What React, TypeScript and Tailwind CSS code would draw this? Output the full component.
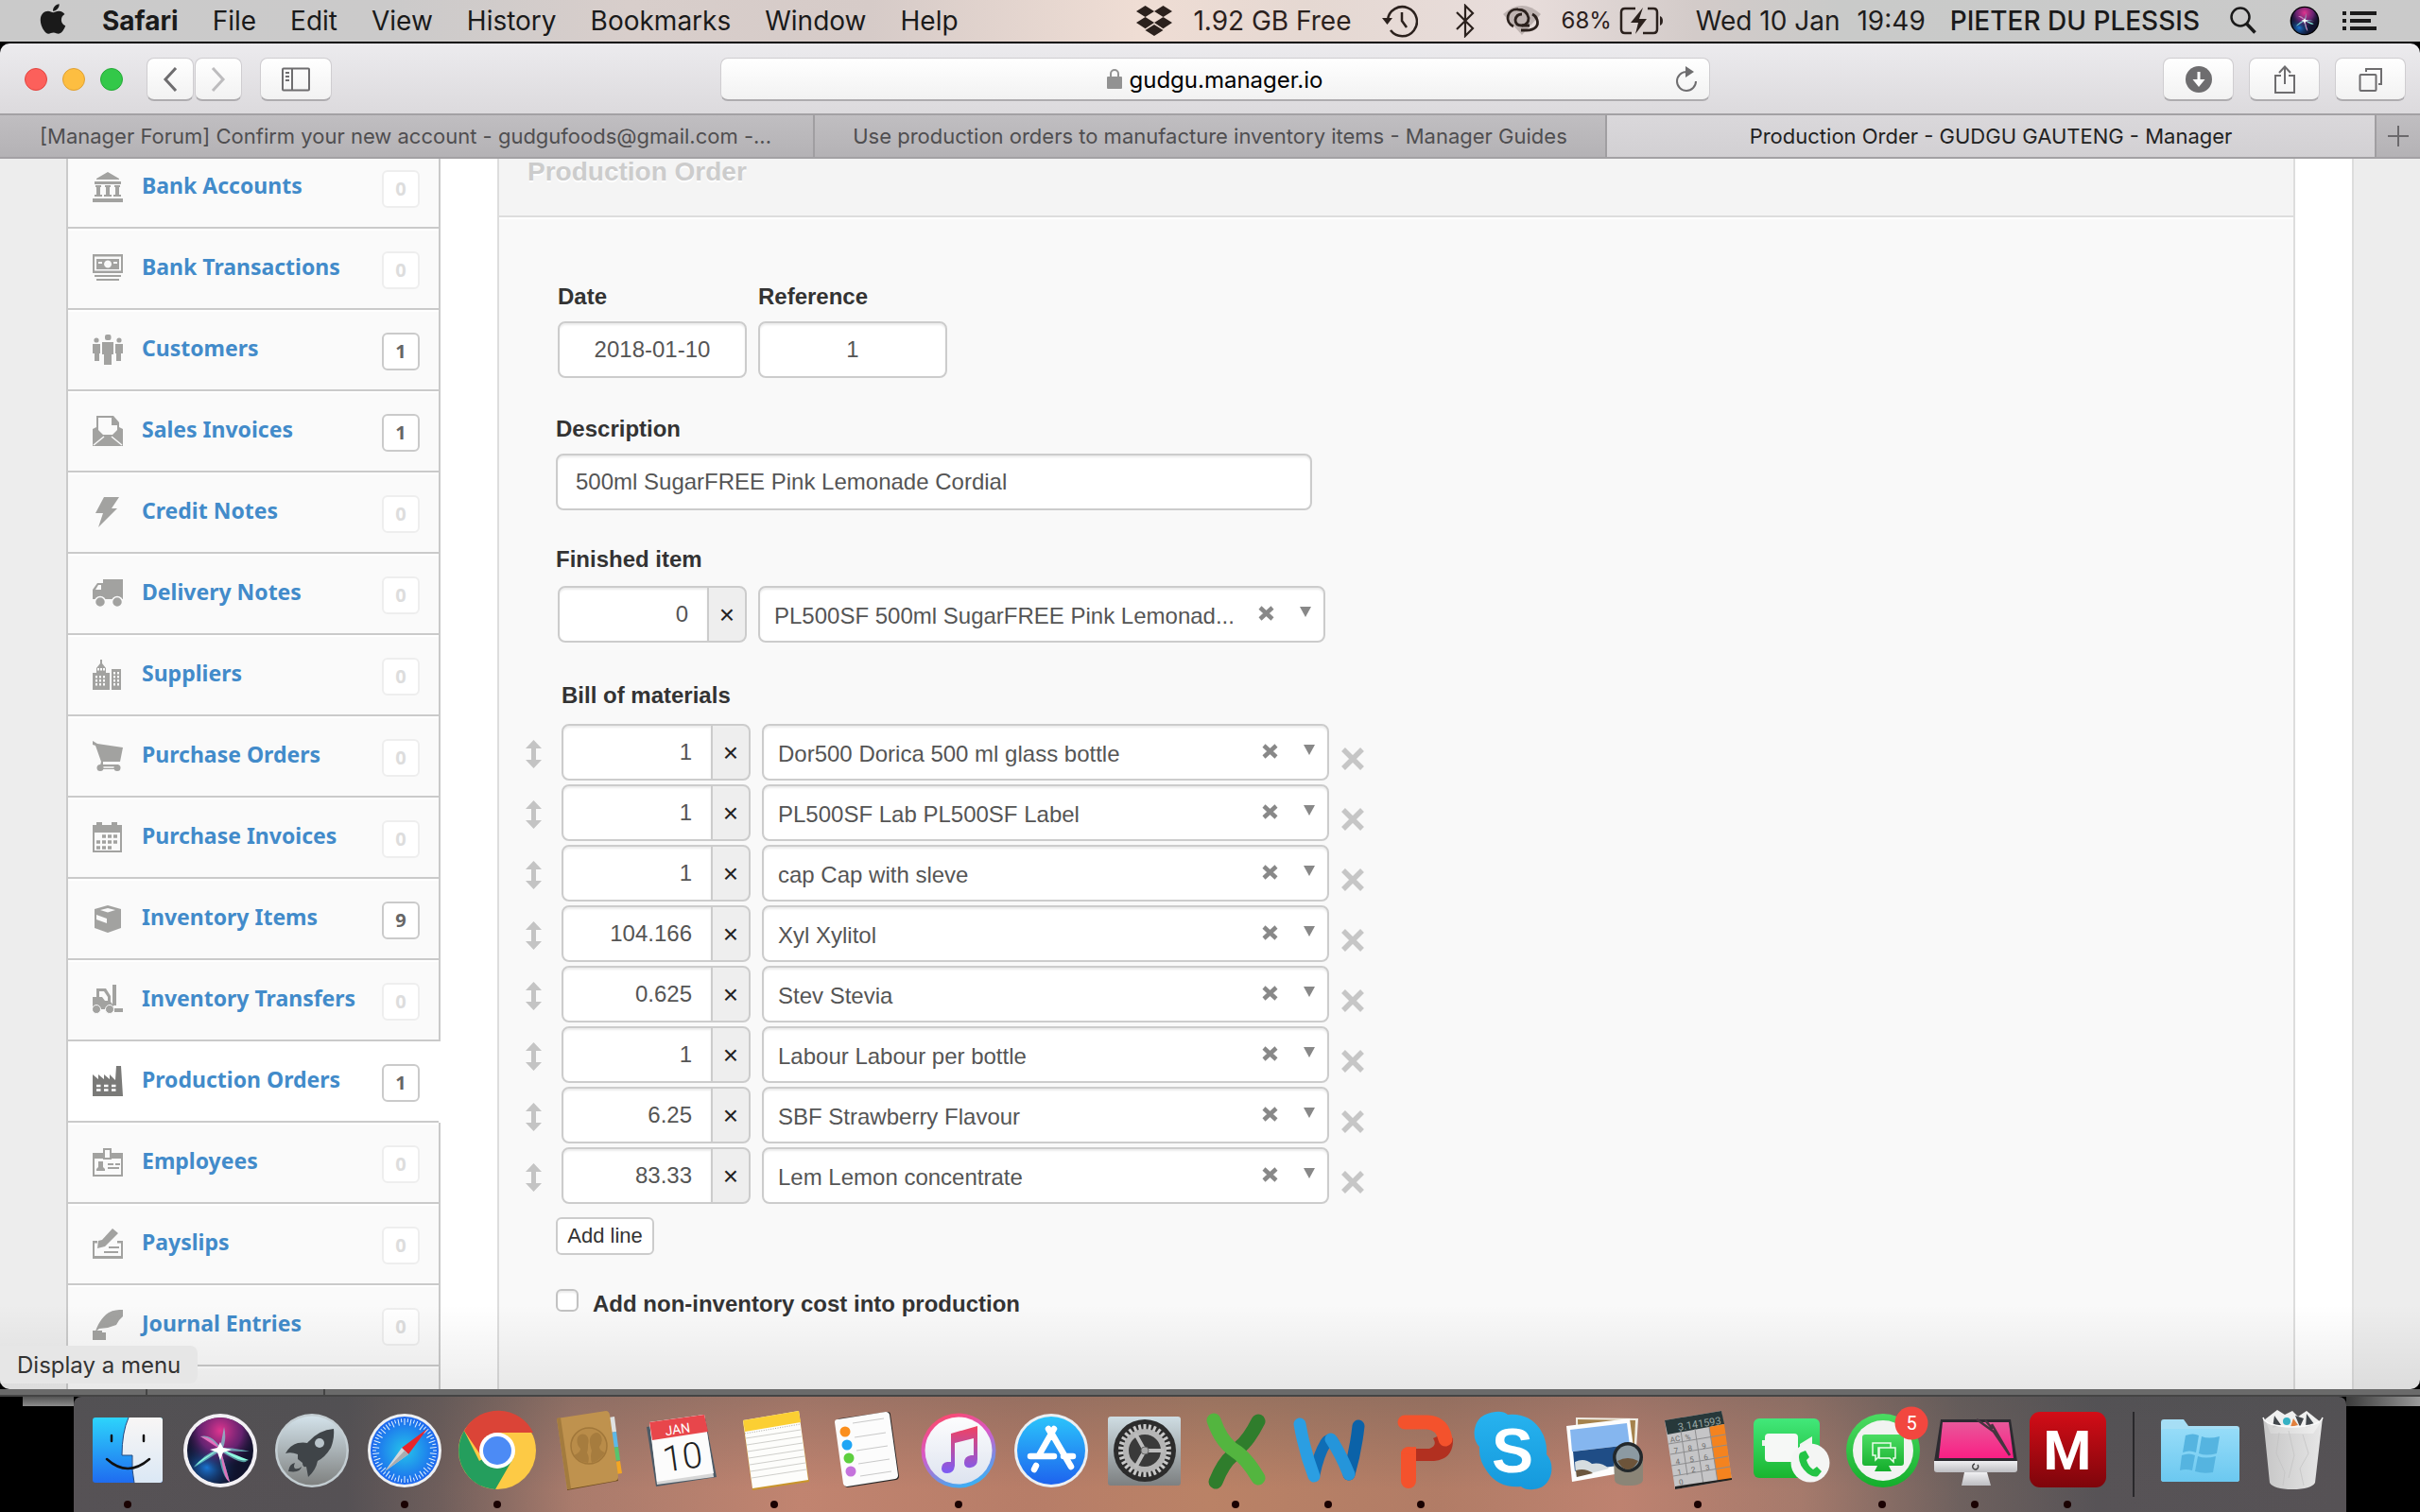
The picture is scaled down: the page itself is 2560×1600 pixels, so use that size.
import React from "react";
import { FaApple, FaDropbox } from "react-icons/fa";

type Kids = { children: React.ReactNode };

/* ---------- menu bar ---------- */

const menus = ["File", "Edit", "View", "History", "Bookmarks", "Window", "Help"];

function MenuBar() {
  return (
    <header className="flex h-[46px] shrink-0 items-center justify-between border-b-2 border-black bg-[linear-gradient(90deg,#cacaca_0%,#cbcaca_16%,#d8cecb_26%,#d6cbc8_36%,#efddd4_47%,#e5d8d2_54%,#e8dddb_63%,#d3cbc9_70%,#c9cac9_76%,#cacaca_100%)] pl-[42px] pr-[46px] text-[28px] leading-8 text-[#1a1a1a]">
      <nav className="flex items-center gap-9">
        <button aria-label="Apple menu" className="mr-0.5 flex w-7 justify-center">
          <FaApple size={36} className="-mt-1 shrink-0" />
        </button>
        <button className="font-bold">Safari</button>
        {menus.map((m) => (
          <button key={m}>{m}</button>
        ))}
      </nav>
      <div className="flex items-center text-[#2b211d]">
        <FaDropbox size={38} className="mr-[22px]" />
        <span className="mr-[32px]">1.92 GB Free</span>
        <svg width="38" height="36" viewBox="0 0 38 36" className="mr-[40px]" fill="none" stroke="currentColor" strokeWidth="2.5">
          <path d="M6 17A15.500 15.500 0 1 1 9 28" />
          <path d="M0 15h11l-5.500 7z" fill="currentColor" stroke="none" />
          <path d="M21 9v9l5 7" />
        </svg>
        <svg width="20" height="36" viewBox="0 0 20 36" className="mr-[30px]" fill="none" stroke="currentColor" strokeWidth="2.200">
          <path d="M1 9l17 17-8 8V2l8 8L1 27" />
        </svg>
        <svg width="40" height="34" viewBox="0 0 40 34" className="mr-[22px]" fill="none" stroke="currentColor" strokeWidth="2.800">
          <path d="M0 10Q20-8 40 10L20 32z" fill="#2b211d" fillOpacity=".22" stroke="none" />
          <path d="M11 23C1 18 4 4 16 5q9 0 11 9 0 7-7 8" />
          <path d="M19 27h6c9 0 13-5 11-11q-1-4-5-6M28 22h-8q-7 0-7-6 1-6 7-6" />
        </svg>
        <span className="mr-2 text-2xl">68%</span>
        <svg width="47" height="30" viewBox="0 0 47 30" className="mr-[34px]" fill="none" stroke="currentColor" strokeWidth="2.500">
          <path d="M17 2H6Q2 2 2 6v18q0 4 4 4h7M30 2h6q4 0 4 4v18q0 4-4 4H25" />
          <path d="M25 1L12 17h8l-3 12 12-16h-8z" fill="currentColor" stroke="none" />
          <path d="M43 10v10q3-1 3-5t-3-5z" fill="currentColor" stroke="none" />
        </svg>
        <span className="mr-[18px] text-[#1f1d1c]">Wed 10 Jan</span>
        <span className="mr-[26px] text-[#1f1d1c]">19:49</span>
        <span className="mr-[32px] font-medium text-[#1a1a1a]">PIETER DU PLESSIS</span>
        <button aria-label="Search" className="mr-[34px]">
          <svg width="29" height="30" viewBox="0 0 29 30" fill="none" stroke="#1a1a1a">
            <circle cx="11" cy="11" r="9.500" strokeWidth="2.500" />
            <path d="M17.500 18l9 9.500" strokeWidth="3.500" />
          </svg>
        </button>
        <svg width="32" height="32" viewBox="0 0 98 98" className="mr-[24px]">
          <Siri id="m" ring="#000" r={47} />
        </svg>
        <button aria-label="Notification centre">
          <svg width="36" height="20" viewBox="0 0 36 20" fill="#1a1a1a">
            <path d="M0 0h4v4H0zM8 0h28v4H8zM0 8h4v4H0zM8 8h22v4H8zM0 16h4v4H0zM8 16h28v4H8z" />
          </svg>
        </button>
      </div>
    </header>
  );
}

/* ---------- browser chrome ---------- */

const chromeBtn =
  "flex h-[46px] items-center justify-center rounded-lg border border-[#cfcdd0] border-b-2 border-b-[#aeacaf] bg-linear-to-b from-white to-[#f2f2f2]";

function Toolbar() {
  return (
    <div className="flex h-[74px] shrink-0 items-center rounded-t-[10px] bg-linear-to-b from-[#ecebee] to-[#dcdadd] px-[26px] pt-0.5">
      <div className="flex flex-1 items-center">
        <button aria-label="Close" className="mr-4 size-6 rounded-full border border-[#e2443f] bg-[#fc605b]" />
        <button aria-label="Minimise" className="mr-4 size-6 rounded-full border border-[#dfa034] bg-[#fdbe41]" />
        <button aria-label="Zoom" className="mr-[25px] size-6 rounded-full border border-[#24a937] bg-[#33c849]" />
        <button aria-label="Back" className={chromeBtn + " mr-px w-[50px]"}>
          <svg width="16" height="26" viewBox="0 0 16 26" fill="none" stroke="#6e6d6f" strokeWidth="3">
            <path d="M14 1L3 13l11 12" />
          </svg>
        </button>
        <button aria-label="Forward" className={chromeBtn + " mr-[19px] w-[50px]"}>
          <svg width="16" height="26" viewBox="0 0 16 26" fill="none" stroke="#bdbcbe" strokeWidth="3">
            <path d="M2 1l11 12L2 25" />
          </svg>
        </button>
        <button aria-label="Show sidebar" className={chromeBtn + " w-[76px]"}>
          <svg width="32" height="26" viewBox="0 0 32 26" fill="none" stroke="#6e6d6f" strokeWidth="2">
            <rect x="2" y="1.500" width="28" height="23" rx="1" />
            <path d="M12 2v23M5 6h4M5 10h4M5 14h4" />
          </svg>
        </button>
      </div>
      <div className={chromeBtn + " relative w-[1047px] pt-0.5"}>
        <svg width="16" height="22" viewBox="0 0 16 22" className="-mt-1 mr-2">
          <path d="M4 10V6a4 4 0 0 1 8 0v4" fill="none" stroke="#929292" strokeWidth="2" />
          <rect x="0" y="9" width="16" height="13" rx="1" fill="#929292" />
        </svg>
        <input aria-label="Address" defaultValue="gudgu.manager.io" className="w-[206px] bg-transparent text-2xl text-black outline-none" />
        <button aria-label="Reload" className="absolute right-3 top-2">
          <svg width="24" height="28" viewBox="0 0 24 28" fill="none" stroke="#6e6d6f" strokeWidth="2">
            <path d="M12 6a10 10 0 1 0 10 10" />
            <path d="M11 0l9 6-9 6z" fill="#6e6d6f" stroke="none" />
          </svg>
        </button>
      </div>
      <div className="-mr-[11px] flex flex-1 justify-end gap-4">
        <button aria-label="Downloads" className={chromeBtn + " w-[75px]"}>
          <svg width="28" height="28" viewBox="0 0 28 28">
            <circle cx="14" cy="14" r="14" fill="#6e6d6f" />
            <path d="M12.500 6h3v8h5L14 22l-6.500-8h5z" fill="#fff" />
          </svg>
        </button>
        <button aria-label="Share" className={chromeBtn + " w-[75px]"}>
          <svg width="24" height="32" viewBox="0 0 24 32" fill="none" stroke="#6e6d6f" strokeWidth="2">
            <path d="M8 12H2v18h20V12h-6M12 21V3M6 9l6-6.500L18 9" />
          </svg>
        </button>
        <button aria-label="Show all tabs" className={chromeBtn + " w-[75px]"}>
          <svg width="26" height="26" viewBox="0 0 26 26" fill="none" stroke="#6e6d6f" strokeWidth="2">
            <rect x="1.500" y="8" width="17" height="17" rx="1" />
            <path d="M8 5V2h16v16h-3" />
          </svg>
        </button>
      </div>
    </div>
  );
}

function Tabs() {
  return (
    <div className="flex h-12 shrink-0 items-stretch border-y-2 border-[#a3a1a4] bg-linear-to-b from-[#c0bec1] to-[#b4b2b5] text-[22px] text-[#4f4e50]">
      <a href="#forum" className="flex w-[862px] items-center border-r-2 border-[#a09ea1] pl-[42px]">
        [Manager Forum] Confirm your new account - gudgufoods@gmail.com -...
      </a>
      <a href="#guides" className="flex w-[838px] items-center justify-center border-r-2 border-[#a09ea1]">
        Use production orders to manufacture inventory items - Manager Guides
      </a>
      <a href="#order" className="flex flex-1 items-center justify-center border-r-2 border-[#a09ea1] bg-linear-to-b from-[#dad8db] to-[#d2d0d3] text-[#222]">
        Production Order - GUDGU GAUTENG - Manager
      </a>
      <button aria-label="New tab" className="flex w-[46px] items-center justify-center">
        <svg width="22" height="22" viewBox="0 0 22 22" stroke="#6b696c" strokeWidth="2">
          <path d="M11 0v22M0 11h22" />
        </svg>
      </button>
    </div>
  );
}

/* ---------- sidebar ---------- */

const glyphs: Record<string, React.ReactNode> = {
  bank: (
    <path d="M16 0l12 7v1H4V7zM2 10h28v3H2zM3 14h6v2H8v8h2v2H2v-2h2v-8H3zM13 14h6v2h-1v8h2v2h-8v-2h2v-8h-1zM23 14h6v2h-1v8h2v2h-8v-2h2v-8h-1zM0 28h32v4H0z" />
  ),
  cash: (
    <>
      <path fillRule="evenodd" d="M0 1h32v20H0zm2 2.500v15h28v-15z" />
      <path fillRule="evenodd" d="M4 6h24v11H4zm12 1.500a4 4 0 1 0 .1 0zM6 9v2h4V9zm16 0v2h4V9z" />
      <path d="M2 23h28v2H2zM4 27h24v2H4z" />
    </>
  ),
  people: (
    <>
      <rect x="13" y="0" width="6.500" height="6" rx="2" />
      <path d="M10 8h12v13h-2v11h-8V21h-2z" />
      <circle cx="4" cy="6" r="2.600" />
      <circle cx="28" cy="6" r="2.600" />
      <path d="M0 10h8v10H7v8H2v-8H0zM24 10h8v10h-2v8h-5v-8h-1z" />
    </>
  ),
  invoice: (
    <>
      <path fillRule="evenodd" d="M4 0h18l6 7v5l4 2v18H0V14l4-2zm2 2v13l5 5h10l5-5V10h-6V2z" />
      <path d="M1 31l11-9M31 31l-11-9" stroke="#fafafa" strokeWidth="1.500" />
    </>
  ),
  bolt: <path d="M12 0h16l-8 12h6L6 32l5-15H3z" />,
  truck: (
    <>
      <path fillRule="evenodd" d="M11 1h21v21H0V12l5-7h6zM9 7H6l-3 5h6z" />
      <circle cx="8" cy="25" r="5.500" stroke="#fafafa" strokeWidth="1.500" />
      <circle cx="26" cy="25" r="5.500" stroke="#fafafa" strokeWidth="1.500" />
    </>
  ),
  city: (
    <>
      <path d="M8 0h2v4l4 5v5h4v18H0V14h4V9l4-5zM20 10h10v22H20z" />
      <path d="M6 9v4M9 9v4M12 9v4M4 17v12M8 17v12M12 17v12M23 13v15M27 13v15" stroke="#fafafa" strokeWidth="2" strokeDasharray="2.500 1.500" />
    </>
  ),
  cart: (
    <>
      <path d="M0 0l5 3 27 4-3 15H11v3h16v5H8v-4l1-4L3 5 0 4z" />
      <path d="M11 28h13" stroke="#fafafa" strokeWidth="1.500" />
      <circle cx="8" cy="28.500" r="3.500" />
      <circle cx="26" cy="28.500" r="3.500" />
    </>
  ),
  calendar: (
    <>
      <path fillRule="evenodd" d="M0 3h4V0h6v3h10V0h6v3h5v29H0zm2 8v19h27V11z" />
      <path d="M10 15h17M4 21h23M4 27h17" stroke="#a2a2a0" strokeWidth="3.500" strokeDasharray="4 2" />
    </>
  ),
  box: (
    <>
      <path d="M16 2l14 4v20l-14 5-14-5V6z" />
      <path d="M8 7l8-2 8 2-8 2.500zM4 12l11 4v5L4 17z" fill="#fafafa" />
    </>
  ),
  forklift: (
    <>
      <path fillRule="evenodd" d="M4 4h10l5 8v6l3 4v4H0V13h4zm3 3v6h3l3 4h3v-4l-4-6z" />
      <path d="M21 0h4v22h-4zM23 25h9v4h-9z" />
      <circle cx="4" cy="26" r="4.500" stroke="#fafafa" />
      <circle cx="18" cy="26" r="4.500" stroke="#fafafa" />
    </>
  ),
  factory: (
    <>
      <path fill="#7a7a78" d="M25 0h5l2 32H0V9l6 5V9l6 5V9l6 5V9l6 6z" />
      <path d="M4 21h21M4 25.500h21" stroke="#fff" strokeWidth="2.500" strokeDasharray="4.500 3.500" />
    </>
  ),
  badge: (
    <>
      <path fillRule="evenodd" d="M0 6h11V1h9v5h12v25H0zm2 6v17h28V12H20v1h-9v-1zm11-9v8h5V3z" />
      <path d="M6 15h5v6l2 2v2H4v-2l2-2zM16 17h6v2h-6zM24 17h5v2h-5zM16 21h12v2H16z" />
    </>
  ),
  pencil: (
    <>
      <path fillRule="evenodd" d="M0 13h5v2.500H2V29h28V15.500h-4V13h6v19H0z" />
      <path d="M21 0l6 5-14 14-8 2 1-8 4-1zM17 19h11v2H17zM12 24h15v2H12z" />
    </>
  ),
  quill: <path d="M32 0v7l-4 4-3 5-9 3-9 1-4 3c2-6 6-15 14-20 5-3 10-3 15-3zM0 22h10v2h4v8H0z" />,
};

const items: [string, string, number][] = [
  ["Bank Accounts", "bank", 0],
  ["Bank Transactions", "cash", 0],
  ["Customers", "people", 1],
  ["Sales Invoices", "invoice", 1],
  ["Credit Notes", "bolt", 0],
  ["Delivery Notes", "truck", 0],
  ["Suppliers", "city", 0],
  ["Purchase Orders", "cart", 0],
  ["Purchase Invoices", "calendar", 0],
  ["Inventory Items", "box", 9],
  ["Inventory Transfers", "forklift", 0],
  ["Production Orders", "factory", 1],
  ["Employees", "badge", 0],
  ["Payslips", "pencil", 0],
  ["Journal Entries", "quill", 0],
];

function Sidebar() {
  return (
    <nav className="-mt-3 flex w-[396px] shrink-0 flex-col border-l-2 border-[#cacaca]">
      {items.map(([label, icon, count]) => {
        const active = label === "Production Orders";
        return (
          <a
            key={label}
            href={"#" + icon}
            className={
              "flex h-[86px] shrink-0 items-center border-b-2 border-b-[#cacaca] pl-[26px] pr-5 " +
              (active ? "mr-0.5 bg-white" : "border-r-2 border-r-[#cacaca] bg-[#fafafa] shadow-[inset_0_2px_0_#fff]")
            }
          >
            <svg width="32" height="32" viewBox="0 0 32 32" fill="#a2a2a0" className="shrink-0">
              {glyphs[icon]}
            </svg>
            <span className="ml-5 flex-1 pb-1 font-['Noto_Sans'] text-[23px] font-bold leading-8 text-[#428bca]">{label}</span>
            <span
              className={
                "mt-1 flex size-10 items-center justify-center rounded-md border-2 bg-white font-['Noto_Sans'] text-xl font-bold " +
                (count ? "border-[#cacaca] text-[#666]" : "border-[#eee] text-[#ddd]")
              }
            >
              {count}
            </span>
          </a>
        );
      })}
      <div className="flex-1 border-r-2 border-[#cacaca] bg-[#fafafa] shadow-[inset_0_2px_0_#fff]" />
    </nav>
  );
}

/* ---------- form ---------- */

const box =
  "h-[60px] border-2 border-[#ccc] bg-white text-2xl text-[#555] shadow-[inset_0_2px_2px_rgba(0,0,0,.075)] outline-none";

function Label({ children, htmlFor }: Kids & { htmlFor: string }) {
  return (
    <label htmlFor={htmlFor} className="block text-2xl font-bold leading-8 text-[#333]">
      {children}
    </label>
  );
}

function Quantity({ value, id, label }: { value: string; id?: string; label: string }) {
  return (
    <div className="flex w-[200px]">
      <input id={id} aria-label={label} defaultValue={value} className={box + " w-[160px] rounded-l-lg pr-5 text-right"} />
      <span className="-ml-0.5 flex h-[60px] w-[42px] items-center justify-center rounded-r-lg border-2 border-[#ccc] bg-[#eee] pt-0.5 text-[28px] text-[#222]">
        ×
      </span>
    </div>
  );
}

function ItemSelect({ value, label }: { value: string; label: string }) {
  return (
    <div className="relative w-[600px]">
      <select aria-label={label} className={box + " w-full appearance-none rounded-lg pl-[15px] pr-24 pt-1"}>
        <option>{value}</option>
      </select>
      <button type="button" aria-label="Clear" className="absolute right-[54px] top-[21px]">
        <svg width="17" height="16" viewBox="0 0 17 16" stroke="#888" strokeWidth="4.500">
          <path d="M2 2l13 12M15 2L2 14" />
        </svg>
      </button>
      <svg width="12" height="11" viewBox="0 0 12 11" fill="#888" className="pointer-events-none absolute right-[15px] top-[22px]">
        <path d="M0 0h12L6 11z" />
      </svg>
    </div>
  );
}

const materials = [
  ["1", "Dor500 Dorica 500 ml glass bottle"],
  ["1", "PL500SF Lab PL500SF Label"],
  ["1", "cap Cap with sleve"],
  ["104.166", "Xyl Xylitol"],
  ["0.625", "Stev Stevia"],
  ["1", "Labour Labour per bottle"],
  ["6.25", "SBF Strawberry Flavour"],
  ["83.33", "Lem Lemon concentrate"],
];

function OrderForm() {
  return (
    <main className="flex min-w-0 flex-1 flex-col border-x-2 border-[#ddd] bg-[#f9f9f9] font-['Liberation_Sans',Arial,sans-serif]">
      <h1 className="h-[62px] shrink-0 border-b-2 border-[#ddd] bg-[#f4f4f4] pl-[30px] text-[28px] font-bold leading-7 text-[#ccc] [text-shadow:0_2px_0_#fff]">
        Production Order
      </h1>
      <form className="border-t-2 border-white pl-[60px] pt-[66px]">
        <div className="flex gap-3 pl-0.5">
          <div className="flex w-[200px] flex-col gap-[10px]">
            <Label htmlFor="date">Date</Label>
            <input id="date" defaultValue="2018-01-10" className={box + " w-full rounded-lg text-center"} />
          </div>
          <div className="flex w-[200px] flex-col gap-[10px]">
            <Label htmlFor="ref">Reference</Label>
            <input id="ref" defaultValue="1" className={box + " w-full rounded-lg text-center"} />
          </div>
        </div>
        <div className="mt-[38px] flex flex-col gap-[10px]">
          <Label htmlFor="desc">Description</Label>
          <input id="desc" defaultValue="500ml SugarFREE Pink Lemonade Cordial" className={box + " w-[800px] rounded-lg pl-[19px]"} />
        </div>
        <div className="mt-9 flex flex-col gap-3">
          <Label htmlFor="finished">Finished item</Label>
          <div className="flex gap-3 pl-0.5">
            <Quantity id="finished" value="0" label="Finished quantity" />
            <ItemSelect value="PL500SF 500ml SugarFREE Pink Lemonad..." label="Finished item" />
          </div>
        </div>
        <div className="mt-10 flex flex-col gap-[14px]">
          <div className="pl-[6px]">
            <Label htmlFor="material-0">Bill of materials</Label>
          </div>
          <div className="-ml-8 flex flex-col gap-1">
            {materials.map(([qty, name], i) => (
              <div key={name} className="flex items-center">
                <svg width="17" height="30" viewBox="0 0 17 30" fill="#c4c4c4" className="mr-[21px] mt-1">
                  <path d="M8.500 0L17 9h-6v12h6l-8.500 9L0 21h6V9H0z" />
                </svg>
                <Quantity id={"material-" + i} value={qty} label={"Quantity " + name} />
                <div className="ml-3">
                  <ItemSelect value={name} label="Material" />
                </div>
                <button type="button" aria-label={"Remove " + name} className="ml-[13px] mt-[14px]">
                  <svg width="24" height="24" viewBox="0 0 24 24" stroke="#c6c6c6" strokeWidth="5.500">
                    <path d="M2 2l20 20M22 2L2 22" />
                  </svg>
                </button>
              </div>
            ))}
          </div>
        </div>
        <button type="button" className="mt-[14px] block h-10 w-[104px] rounded-md border-2 border-[#ccc] bg-white text-[22px] leading-8 text-[#333]">
          Add line
        </button>
        <div className="mt-9 flex items-center gap-[15px]">
          <input
            id="cost"
            type="checkbox"
            className="-mt-2 size-6 appearance-none rounded-md border-2 border-[#c2c2c2] bg-white shadow-[inset_0_2px_2px_rgba(0,0,0,.08)]"
          />
          <Label htmlFor="cost">Add non-inventory cost into production</Label>
        </div>
      </form>
    </main>
  );
}

/* ---------- dock icons, each on a 98 x 98 canvas ---------- */

function Grad({ id, a, b, h }: { id: string; a: string; b: string; h?: boolean }) {
  return (
    <linearGradient id={id} x1="0" y1="0" x2={h ? 1 : 0} y2={h ? 0 : 1}>
      <stop stopColor={a} />
      <stop offset="1" stopColor={b} />
    </linearGradient>
  );
}

function Siri({ id, ring, r }: { id: string; ring: string; r: number }) {
  return (
    <>
      <radialGradient id={"sa" + id} cx=".5" cy=".2" r=".6">
        <stop stopColor="#e0358f" />
        <stop offset=".55" stopColor="#7a2680" stopOpacity=".8" />
        <stop offset="1" stopColor="#10122c" stopOpacity="0" />
      </radialGradient>
      <radialGradient id={"sb" + id} cx=".3" cy=".75" r=".5">
        <stop stopColor="#1b78d8" />
        <stop offset="1" stopColor="#10122c" stopOpacity="0" />
      </radialGradient>
      <circle cx="49" cy="49" r={r} fill={ring} />
      <circle cx="49" cy="49" r={r - 4} fill="#10122c" />
      <circle cx="49" cy="49" r={r - 4} fill={"url(#sb" + id + ")"} />
      <circle cx="49" cy="49" r={r - 4} fill={"url(#sa" + id + ")"} />
      <path d="M49 46L28 34q12-3 21 12l4-22q3 12-1 22 12 0 28 4-16 0-28-1l25 11q-4 5-27-10l9 32q-8-4-12-31L21 67q10-14 28-21z" fill="#7df0e4" fillOpacity=".6" />
      <path d="M49 47l10 35q-7-2-10-35zM28 34q12 0 20 13z" fill="#f56cc0" fillOpacity=".85" />
      <path d="M49 47L21 66q8-9 28-19l30 12q-10 3-30-12z" fill="#8ffbe0" />
      <path d="M49 40l3 6 9 2-9 3-3 8-3-8-8-3 8-2z" fill="#fff" />
    </>
  );
}

const ticks = Array.from({ length: 60 }, (_, i) => i * 6);
const teeth = Array.from({ length: 30 }, (_, i) => i * 12);

const dock: { name: string; run?: boolean; art: React.ReactNode }[] = [
  {
    name: "Finder",
    run: true,
    art: (
      <>
        <Grad id="fi" a="#2dd4fb" b="#1f6cf0" />
        <Grad id="fj" a="#f8f6f5" b="#dbe8f5" />
        <rect x="12" y="14" width="74" height="69" rx="3" fill="url(#fi)" />
        <path d="M50 14h33q3 0 3 3v63q0 3-3 3H56q-3-14-2-29H43q0-24 7-40z" fill="url(#fj)" />
        <path d="M50 14q-7 16-7 40h11q-1 15 2 29" fill="none" stroke="#234a80" strokeWidth="1" />
        <path d="M27 58q22 20 45 0M32 33v6M66 33v6" fill="none" stroke="#111" strokeWidth="2.500" strokeLinecap="round" />
      </>
    ),
  },
  { name: "Siri", art: <Siri id="d" ring="#f2f0f4" r={39} /> },
  {
    name: "Launchpad",
    art: (
      <>
        <Grad id="la" a="#d3e2ea" b="#7f8180" />
        <circle cx="49" cy="49" r="39" fill="#c3cdd2" />
        <circle cx="49" cy="49" r="36.500" fill="url(#la)" />
        <path d="M72 26q1 10-3 20-6 10-14 14-2 10-10 17-1-6-2-11-4 1-4-4l-5-4 0-5q-7-3-13-1 5-9 13-11 6-1 10 0 12-14 28-15z" fill="#3f4448" />
        <path d="M24 71q1-8 7-9-2 4 0 6 4 1 7-2-1 7-14 5z" fill="#3f4448" />
        <circle cx="57" cy="41" r="5" fill="#b9c4ca" />
      </>
    ),
  },
  {
    name: "Safari",
    run: true,
    art: (
      <>
        <radialGradient id="sf">
          <stop stopColor="#25c5ea" />
          <stop offset="1" stopColor="#1c66ee" />
        </radialGradient>
        <circle cx="49" cy="49" r="39" fill="#eef0f2" />
        <circle cx="49" cy="49" r="36" fill="url(#sf)" />
        {ticks.map((a) => (
          <path key={a} d={a % 12 ? "M49 15v4" : "M49 15v7"} stroke="#e6f4fd" strokeWidth="1" transform={`rotate(${a} 49 49)`} />
        ))}
        <path d="M73 26L53 53l-7-7z" fill="#e8252b" />
        <path d="M28 71l18-25 7 7z" fill="#d6d8da" />
        <path d="M28 71l21-22 4 4z" fill="#a9acb0" />
      </>
    ),
  },
  {
    name: "Chrome",
    run: true,
    art: (
      <>
        <circle cx="49" cy="49" r="41" fill="#fdca45" />
        <path d="M49 49L30 60 14 28A41 41 0 0 0 47 90L66 57z" fill="#249e5d" />
        <path d="M14 28A41 41 0 0 1 87 30H49v19L33 56z" fill="#db4437" />
        <circle cx="49" cy="49" r="19" fill="#fff" />
        <circle cx="49" cy="49" r="15" fill="#4c8bf5" />
      </>
    ),
  },
  {
    name: "Contacts",
    art: (
      <>
        <path d="M70 14l6-1 2 16-6 1z" fill="#dfe1e2" />
        <path d="M72 30l6-1 2 16-6 1z" fill="#5cb8e8" />
        <path d="M74 46l6-1 2 14-6 1z" fill="#58c46c" />
        <path d="M76 61l6-1 2 13-6 1z" fill="#f3a623" />
        <path d="M26 91l54-10-1-4-53 9z" fill="#6e4c1f" />
        <path d="M15 15l52-8q3 0 4 4l9 65q0 4-3 5l-51 9z" fill="#bf924e" />
        <path d="M15 15l4-1 11 75-4 1z" fill="#a37b3e" />
        <circle cx="49" cy="44" r="19" fill="#b98c49" stroke="#a1773a" strokeWidth="1.500" />
        <path d="M33 54q7-3 7-7-5-5-3-12 3-5 8-3 5 3 3 11 0 6-1 8 3 6 1 11-10-1-15-8z" fill="#a67c3e" />
        <path d="M66 51q-6-2-6-6 4-5 2-11-3-6-8-3-5 3-4 10 1 6 2 8-2 6 0 13 9-2 14-11z" fill="#a67c3e" />
      </>
    ),
  },
  {
    name: "Calendar",
    art: (
      <>
        <path d="M12 24l62-9 12 62-64 10z" fill="#4c5a66" />
        <path d="M15 19l58-8 10 66-60 8z" fill="#d7d7d7" />
        <path d="M15 19l58-8 10 62-60 9z" fill="#fcfcfc" />
        <path d="M15 19l58-8 4 18-59 9z" fill="#e8464b" />
        <g transform="rotate(-8 49 49)" textAnchor="middle" fontFamily="Roboto">
          <text x="48" y="31" fontSize="14" fill="#fff">JAN</text>
          <text x="49" y="69" fontSize="38" fontWeight="300" fill="#222">10</text>
        </g>
      </>
    ),
  },
  {
    name: "Notes",
    run: true,
    art: (
      <>
        <path d="M16 20l59-11 11 73-60 9z" fill="#c9952c" />
        <path d="M16 17l59-10 10 73-59 9z" fill="#fdfdfb" />
        <path d="M16 17l59-10 2 12-59 10z" fill="#fbcf33" />
        <path d="M19 36l58-9M20 43l58-9M21 50l58-9M22 57l58-9M23 64l58-9M24 71l58-9M25 78l58-9" stroke="#cfcfcb" strokeWidth="1" />
        <path d="M18 31l59-10" stroke="#aaa" strokeDasharray="1 1.500" />
      </>
    ),
  },
  {
    name: "Reminders",
    art: (
      <>
        <path d="M18 18q0-2 3-3l51-7q3 0 3 3l9 65q0 3-3 4l-51 8q-3 0-4-3z" fill="#272727" />
        <path d="M16 19q0-3 3-3l51-8q3 0 4 3l9 64q0 3-3 4l-51 8q-3 0-4-3z" fill="#fcfcfc" />
        <circle cx="27" cy="29" r="5.500" fill="#fb8f1d" />
        <circle cx="29" cy="43" r="5.500" fill="#1fa5f5" />
        <circle cx="31" cy="57" r="5.500" fill="#5dcf3f" />
        <circle cx="33" cy="71" r="5.500" fill="#c573dc" />
        <path d="M35 20l33-5M37 35l33-5M39 49l33-5M41 63l33-5M43 76l33-5" stroke="#c9c9c9" />
      </>
    ),
  },
  {
    name: "iTunes",
    run: true,
    art: (
      <>
        <linearGradient id="it" x1=".3" y1="0" x2=".7" y2="1">
          <stop stopColor="#fb4a6a" />
          <stop offset=".4" stopColor="#d859c8" />
          <stop offset="1" stopColor="#2fb6f8" />
        </linearGradient>
        <Grad id="iu" a="#fdfdfe" b="#dde3ef" />
        <Grad id="iv" a="#f2415f" b="#7b5cf5" />
        <circle cx="49" cy="49" r="39.500" fill="url(#it)" />
        <circle cx="49" cy="49" r="35.500" fill="url(#iu)" />
        <path d="M41 31l28-8v35q0 8-7 9-7 1-7-5 0-7 7-8h3V36l-20 5v24q-1 8-8 8-6 0-6-5 0-6 6-7h4z" fill="url(#iv)" />
      </>
    ),
  },
  {
    name: "App Store",
    art: (
      <>
        <Grad id="as" a="#2bc4fb" b="#1e63ee" />
        <circle cx="49" cy="49" r="39" fill="#eceff2" />
        <circle cx="49" cy="49" r="36" fill="url(#as)" />
        <path d="M46 26l3 5M52 26L36 54M49 30l21 36M33 65l-2 4M27 55h25M62 55h10" stroke="#fff" strokeWidth="6.500" strokeLinecap="round" fill="none" />
      </>
    ),
  },
  {
    name: "System Preferences",
    art: (
      <>
        <Grad id="sp" a="#cfdde3" b="#7d8081" />
        <rect x="11" y="13" width="77" height="73" rx="3" fill="url(#sp)" />
        <circle cx="50" cy="49" r="33" fill="#2c2c2c" />
        {teeth.map((a) => (
          <rect key={a} x="48.500" y="21" width="3" height="8" fill="#c9c9c9" transform={`rotate(${a} 50 49)`} />
        ))}
        <circle cx="50" cy="49" r="20" fill="#3a3a3a" stroke="#b5b5b5" strokeWidth="6" />
        <path d="M50 49h20M50 49L40 31M50 49L40 67" stroke="#bdbdbd" strokeWidth="4" />
        <circle cx="50" cy="49" r="4" fill="#aaa" stroke="#666" />
      </>
    ),
  },
  {
    name: "Excel",
    run: true,
    art: (
      <g fill="none" strokeWidth="15" strokeLinecap="round">
        <path d="M73 18Q62 40 50 48" stroke="#2f7d2c" />
        <path d="M46 54Q36 62 28 82" stroke="#2f7d2c" />
        <path d="M26 17Q34 40 48 49 60 56 73 78" stroke="#53b53f" />
      </g>
    ),
  },
  {
    name: "Word",
    run: true,
    art: (
      <g fill="none" strokeWidth="13" strokeLinecap="round" strokeLinejoin="round">
        <path d="M71 74Q78 50 81 23" stroke="#0b62a8" />
        <path d="M34 76Q39 52 47 40q4-5 8 1" stroke="#0f6db5" strokeWidth="12" />
        <path d="M52 37Q62 52 71 74" stroke="#2595da" />
        <path d="M19 21Q24 50 34 76" stroke="#2b9ee2" />
      </g>
    ),
  },
  {
    name: "PowerPoint",
    run: true,
    art: (
      <>
        <path d="M62 36q10-6 21 0 1 22-20 24H44V47h14q9-3 4-11z" fill="#b23020" />
        <path d="M32 19h24q16 1 19 18" fill="none" stroke="#f4522c" strokeWidth="15" strokeLinecap="round" />
        <path d="M36 53v28" stroke="#f4522c" strokeWidth="16" strokeLinecap="round" />
        <path d="M28 52q1-7 16-7v9z" fill="#f4522c" />
      </>
    ),
  },
  {
    name: "Skype",
    art: (
      <>
        <Grad id="sk" a="#27b3ef" b="#1599dc" />
        <path d="M31 8q8-1 13 3 22-2 34 15 8 12 7 27 7 8 5 20-4 16-19 17-8 1-13-3-24 2-36-16Q13 59 14 45 7 38 9 26q3-16 22-18z" fill="url(#sk)" />
        <text x="49" y="72" fontSize="66" fontWeight="700" textAnchor="middle" fill="#fff" fontFamily="Liberation Sans">S</text>
      </>
    ),
  },
  {
    name: "Preview",
    art: (
      <>
        <path d="M18 14l66 1-3 48-62-1z" fill="#f1ede4" />
        <path d="M20 16l61 1-2 44-58-1z" fill="#a5824c" />
        <path d="M8 23l67-8 7 55-68 12z" fill="#fdfdfd" />
        <path d="M12 27l60-7 3 23-61 7z" fill="#85b6ef" />
        <path d="M15 50l60-7 3 20-61 8z" fill="#1f4d86" />
        <path d="M17 61q10-5 18 2 10-2 18 5l-35 9z" fill="#d6dde0" />
        <path d="M18 70q10-3 18 3l-17 4z" fill="#6b573f" />
        <path d="M58 58h31v22q-1 6-15 6t-15-6z" fill="#8b8577" />
        <circle cx="73" cy="56" r="16" fill="#23282b" />
        <circle cx="73" cy="56" r="12.500" fill="#8c9aa2" />
        <path d="M62 60q11-6 22 0-5 9-11 9t-11-9z" fill="#6d543a" />
      </>
    ),
  },
  {
    name: "Calculator",
    run: true,
    art: (
      <>
        <path d="M14 17l60-10 11 73-60 10z" fill="#c5c5c7" />
        <path d="M14 17l60-10 3 14-60 11z" fill="#27383a" />
        <path d="M61 24l16-3 8 59-15 2z" fill="#f4831f" />
        <path d="M18 42l60-10M20 53l60-10M21 65l60-10M23 76l60-10M31 28l7 47M46 26l9 59M61 24l9 58" stroke="#8c8c8e" />
        <path d="M25 90l60-10v-2l-60 9z" fill="#222" />
        <g transform="rotate(-9 49 49)" fontFamily="Roboto" fill="#6c6c6c" fontSize="8">
          <text x="32" y="25" fontSize="11" fill="#9aa8a5">3.141593</text>
          <text x="22" y="36">AC</text>
          <text x="38" y="36">%</text>
          <text x="24" y="48">7</text>
          <text x="39" y="48">8</text>
          <text x="54" y="48">9</text>
          <text x="24" y="60">4</text>
          <text x="39" y="60">5</text>
          <text x="54" y="60">6</text>
          <text x="24" y="71">1</text>
          <text x="39" y="71">2</text>
          <text x="54" y="71">3</text>
          <text x="24" y="82">0</text>
        </g>
      </>
    ),
  },
  {
    name: "FaceTime",
    art: (
      <>
        <Grad id="ft" a="#42e87a" b="#19b52f" />
        <rect x="10" y="15" width="70" height="63" rx="6" fill="url(#ft)" />
        <rect x="22" y="31" width="35" height="30" rx="4" fill="#f6f8f6" />
        <path d="M59 42l13-8v25l-13-8zM19 38h3v6h-3z" fill="#f0f4f0" />
        <circle cx="70" cy="62" r="20.500" fill="#f4f5f4" />
        <path d="M60 51l5-2 4 7-3 3q2 7 7 10l4-3 5 5-4 5q-4 2-11-3-9-8-9-17 0-4 2-5z" fill="#23c445" />
      </>
    ),
  },
  {
    name: "Messages",
    run: true,
    art: (
      <>
        <Grad id="ms" a="#4bdc62" b="#14ad2b" />
        <circle cx="50" cy="49" r="39" fill="url(#ms)" />
        <circle cx="50" cy="49" r="32" fill="#f1f3f1" />
        <path d="M31 32h38q3 0 3 3v27q0 3-3 3H56l3 6H41l3-6H31q-3 0-3-3V35q0-3 3-3z" fill="url(#ms)" />
        <path d="M39 41h19v5H45v10l-3 3v-5h-3zM46 46h17v11h-2v4l-4-4H46z" fill="none" stroke="#eafbea" strokeWidth="1.500" />
        <circle cx="80" cy="20" r="17.500" fill="#f2473f" />
        <text x="80" y="27" fontSize="20" textAnchor="middle" fill="#fff" fontFamily="Roboto">5</text>
      </>
    ),
  },
  {
    name: "CleanMyMac",
    run: true,
    art: (
      <>
        <Grad id="cm" a="#e8589a" b="#fa1f84" />
        <Grad id="cn" a="#f0f0f2" b="#bdbdc1" />
        <path d="M38 72h24l4 14H35z" fill="url(#cn)" />
        <path d="M13 16h74l7 45H6z" fill="#2c2a30" />
        <path d="M15 19h70l5 38H11z" fill="url(#cm)" />
        <path d="M6 60h88v9q0 3-3 3H9q-3 0-3-3z" fill="url(#cn)" />
        <path d="M51 16l18 13 17 25M67 21l19 33M60 17l8 9" stroke="#45353f" strokeWidth="2.500" fill="none" />
        <path d="M49 63a3 3 0 1 0 3 1" stroke="#444" strokeWidth="1.500" fill="none" />
      </>
    ),
  },
  {
    name: "Mendeley",
    run: true,
    art: (
      <>
        <Grad id="me" a="#d30d17" b="#7e050b" />
        <rect x="9" y="8" width="81" height="80" rx="11" fill="url(#me)" />
        <text x="49" y="69" fontSize="58" fontWeight="700" textAnchor="middle" fill="#fff" fontFamily="Roboto">M</text>
      </>
    ),
  },
];

const tail: { name: string; run?: boolean; art: React.ReactNode }[] = [
  {
    name: "Windows applications",
    art: (
      <>
        <Grad id="fo" a="#96dcf8" b="#6bc8f0" />
        <path d="M8 19q0-3 3-3h21l5 7h51q3 0 3 3v53q0 3-3 3H11q-3 0-3-3z" fill="#a6def5" />
        <path d="M8 29q0-3 3-3h77q3 0 3 3v50q0 3-3 3H11q-3 0-3-3z" fill="url(#fo)" />
        <path d="M34 33q8-3 14 0l-3 18q-7-3-14 0zM51 34q7 3 19 0l-3 18q-11 3-19 0zM30 54q8-3 14 0l-3 16q-7-2-13 0zM47 55q8 3 19 0l-3 17q-10 2-19-1z" fill="#55b4e0" />
      </>
    ),
  },
  {
    name: "Trash",
    art: (
      <>
        <Grad id="tr" a="#cfcfcf" b="#f1f1f1" h />
        <path d="M20 16L33 6l8 5 8-4 6 6 9-6 15 12-8 12H26z" fill="#efefef" />
        <path d="M30 12l7 10-9 3zM52 12l9 3-4 9zM64 10l8 11-9 4z" fill="#42474c" />
        <circle cx="43" cy="18" r="4" fill="#35b1c4" />
        <path d="M50 15l5 7-8 2z" fill="#e2803d" />
        <path d="M18 14q0 9 31 10 32-1 32-10l-8 69q-4 7-24 7t-24-7z" fill="url(#tr)" fillOpacity=".93" />
        <path d="M18 14q2 9 31 10 30-1 32-10" fill="none" stroke="#fafafa" strokeWidth="1.500" />
        <path d="M35 30l-3 22 9 20-2 14M60 32l6 20-9 16 4 18M45 28l6 26-6 24" fill="none" stroke="#c2c2c2" strokeOpacity=".7" />
      </>
    ),
  },
];

function DockItem({ name, run, art }: { name: string; run?: boolean; art: React.ReactNode }) {
  return (
    <button aria-label={name} className="flex min-w-0 flex-1 flex-col items-center">
      <svg width="98" height="98" viewBox="0 0 98 98" className="shrink-0">
        {art}
      </svg>
      {run && <span className="mt-1 size-2 rounded-full bg-[#1a0202]" />}
    </button>
  );
}

function Dock() {
  return (
    <footer className="h-[130px] shrink-0 bg-black">
      <div className="flex h-2 justify-start border-b-2 border-[#444] bg-[#6a6a6a]">
        <span className="ml-[154px] w-0.5 bg-[#444]" />
        <span className="ml-[186px] w-0.5 bg-[#444]" />
      </div>
      <div className="flex items-start">
        <div className="flex h-[10px] w-[78px] shrink-0 justify-end">
          <span className="h-[10px] w-[54px] bg-linear-to-b from-[#555] to-[#8c8c8c]" />
        </div>
        <div className="flex h-[122px] min-w-0 flex-1 items-start rounded-t-[8px] bg-[linear-gradient(180deg,rgba(80,80,80,.3),rgba(255,130,100,.02)_80%),linear-gradient(90deg,#535155_0%,#525054_12%,#6b5d5b_16%,#a87b6c_22%,#c08470_32%,#b67d68_42%,#b98266_50%,#b07c66_60%,#bd8270_68%,#a47a6c_76%,#6b605e_83%,#545256_89%,#535155_100%)] px-2 pt-2">
          {dock.map((d) => (
            <DockItem key={d.name} {...d} />
          ))}
          <div className="flex w-[43px] shrink-0 justify-center">
            <span className="mt-2 h-[90px] w-0.5 bg-[#29282b]" />
          </div>
          {tail.map((d) => (
            <DockItem key={d.name} {...d} />
          ))}
        </div>
        <div className="h-[10px] w-[78px] shrink-0 bg-linear-to-r from-[#3c3c3c] to-[#9a9a9a]" />
      </div>
    </footer>
  );
}

export default function App() {
  return (
    <div className="flex h-screen flex-col overflow-hidden bg-black font-[Inter,sans-serif]">
      <MenuBar />
      <Toolbar />
      <Tabs />
      <div className="relative flex min-h-0 flex-1 overflow-hidden rounded-b-[10px] bg-[#ededed] px-[70px]">
        <div className="flex min-h-0 min-w-0 flex-1 border-r-2 border-[#ddd] bg-white pr-[60px]">
          <Sidebar />
          <div className="w-[60px] shrink-0" />
          <OrderForm />
        </div>
        <div className="pointer-events-none absolute inset-x-0 bottom-0 h-[90px] bg-linear-to-b from-transparent to-black/7" />
        <div role="status" className="absolute bottom-[6px] left-0 flex h-10 items-center rounded-r-lg bg-[#e6e6e6] px-[18px] pt-0.5 text-2xl text-[#333]">
          Display a menu
        </div>
      </div>
      <Dock />
    </div>
  );
}
